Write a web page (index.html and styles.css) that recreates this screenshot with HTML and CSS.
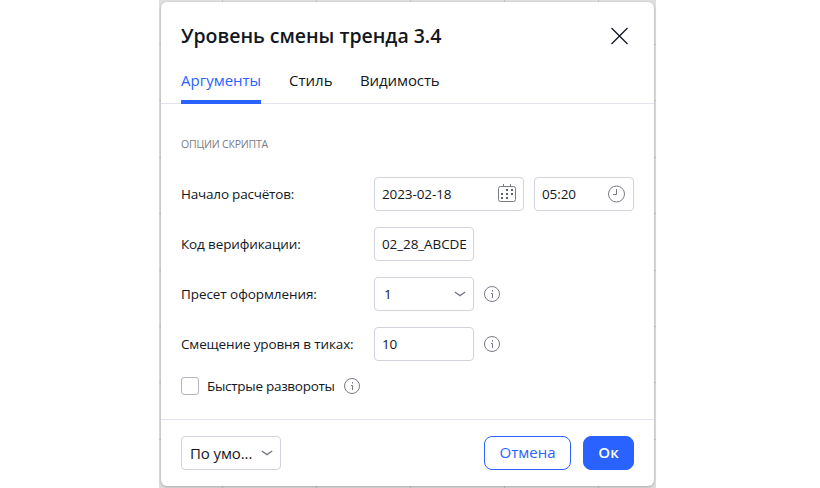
FILE: index.html
```html
<!DOCTYPE html>
<html lang="ru">
<head>
<meta charset="utf-8">
<title>Уровень смены тренда 3.4</title>
<link rel="stylesheet" href="styles.css">
</head>
<body>
<svg class="defs" aria-hidden="true">
  <symbol id="info" viewBox="0 0 16 16"><circle cx="8" cy="8" r="7.5"/><path d="M7 7.500h1.500V12M8.500 4v1.500"/></symbol>
  <symbol id="chevron" viewBox="0 0 12 6"><path d="M.8 1 6 4.500 11.200 1" stroke-width="1.500"/></symbol>
</svg>
<div class="backdrop">
  <main class="dialog">
    <header class="header">
      <h1 class="title">Уровень смены тренда 3.4</h1>
      <svg class="close" viewBox="0 0 18 18"><path d="m1.500 1 16 16M17.500 1l-16 16"/></svg>
    </header>
    <nav class="tabs">
      <a class="tab active">Аргументы</a>
      <a class="tab style">Стиль</a>
      <a class="tab visibility">Видимость</a>
    </nav>
    <section class="content">
      <h2 class="section-title">ОПЦИИ СКРИПТА</h2>
      <div class="row">
        <span class="label start">Начало расчётов:</span>
        <div class="field date"><span>2023-02-18</span>
          <svg class="icon calendar" viewBox="0 0 18 18"><rect x=".5" y="2.5" width="17" height="15" rx="2"/><path d="M5.500 0v3M12.500 0v3"/><path class="dots" d="M8 5h2v2H8zM13 5h2v2h-2zM3 9h2v2H3zM8 9h2v2H8zM13 9h2v2h-2zM3 13h2v2H3zM8 13h2v2H8z"/></svg>
        </div>
        <div class="field time"><span>05:20</span>
          <svg class="icon clock" viewBox="0 0 18 18"><circle cx="8.5" cy="9" r="8"/><path d="M8.500 4v5.500H5"/></svg>
        </div>
      </div>
      <div class="row">
        <span class="label">Код верификации:</span>
        <div class="field"><span>02_28_ABCDE</span></div>
      </div>
      <div class="row">
        <span class="label preset">Пресет оформления:</span>
        <div class="field select"><span>1</span><svg class="chevron"><use href="#chevron"/></svg></div>
        <svg class="info"><use href="#info"/></svg>
      </div>
      <div class="row">
        <span class="label">Смещение уровня в тиках:</span>
        <div class="field"><span>10</span></div>
        <svg class="info"><use href="#info"/></svg>
      </div>
      <div class="check-row">
        <span class="checkbox"></span>
        <span class="check-label">Быстрые развороты</span>
        <svg class="info"><use href="#info"/></svg>
      </div>
    </section>
    <footer class="footer">
      <div class="field defaults"><span>По умо...</span><svg class="chevron"><use href="#chevron"/></svg></div>
      <button class="button cancel">Отмена</button>
      <button class="button ok">Ок</button>
    </footer>
  </main>
</div>
</body>
</html>
```

FILE: styles.css
```css
* { box-sizing: border-box; }
body {
  margin: 0;
  height: 488px;
  overflow: hidden;
  background: #fff;
  color: #131722;
  font: 13.5px/20px "Trebuchet MS", "Open Sans", "Noto Sans", sans-serif;
}
.defs { position: absolute; width: 0; height: 0; }
svg { display: block; flex: none; fill: none; stroke: #787b86; }
.backdrop {
  width: 497px;
  height: 488px;
  margin-left: 159px;
  padding: 2px 2px 0;
  background:
    repeating-linear-gradient(90deg, transparent 0 63px, #c5c6c8 63px 64px, transparent 64px 94px),
    repeating-linear-gradient(transparent 0 44px, #c5c6c8 44px 45px, transparent 45px 56.4px),
    #dfdfdf;
}
.dialog {
  display: flex;
  flex-direction: column;
  width: 493px;
  height: 484px;
  border-radius: 6px;
  background: #fff;
  box-shadow: 0 1px 3px rgba(0, 0, 0, .25);
}
.header {
  display: flex;
  align-items: center;
  justify-content: space-between;
  height: 67px;
  padding: 1px 26px 0 20px;
}
.title { margin: 0; font-size: 19.5px; line-height: 28px; font-weight: 600; letter-spacing: -.02px; white-space: nowrap; }
.close { width: 18px; height: 18px; stroke: #131722; stroke-width: 1.3; }
.tabs {
  display: flex;
  height: 35px;
  padding-left: 20px;
  border-bottom: 1px solid #e0e3eb;
  font-size: 15px;
  line-height: 22px;
}
.tab { height: 35px; margin-right: 28px; white-space: nowrap; }
.tab.active { width: 80px; color: #2962ff; border-bottom: 4px solid #2962ff; }
.tab.style { width: 43px; }
.tab.visibility { letter-spacing: -.1px; }
.content { height: 315px; padding: 31px 20px 0; }
.section-title { margin: 0 0 24px; color: #787b86; font-size: 10.5px; line-height: 18px; font-weight: 400; letter-spacing: -.2px; }
.row { display: flex; align-items: center; height: 34px; margin-bottom: 16px; }
.label { width: 193px; letter-spacing: -.13px; white-space: nowrap; }
.label.start { letter-spacing: -.2px; }
.label.preset { letter-spacing: -.07px; }
.field {
  display: flex;
  align-items: center;
  justify-content: space-between;
  width: 100px;
  height: 34px;
  padding: 0 7px;
  border: 1px solid #d1d4dc;
  border-radius: 4px;
  letter-spacing: -.1px;
  white-space: nowrap;
}
.date { width: 150px; margin-right: 10px; }
.icon { width: 18px; height: 18px; }
.calendar { margin-top: -2px; }
.dots { fill: #5d606b; stroke: none; }
.select { padding-left: 9px; }
.chevron { width: 12px; height: 6px; }
.info { width: 16px; height: 16px; margin-left: 10px; }
.check-row { display: flex; align-items: center; height: 18px; }
.checkbox { width: 18px; height: 18px; margin-right: 8px; border: 1px solid #b2b5be; border-radius: 3px; }
.check-label { width: 127px; letter-spacing: -.28px; white-space: nowrap; }
.footer {
  display: flex;
  align-items: center;
  flex: 1;
  padding: 0 20px;
  border-top: 1px solid #e0e3eb;
}
.defaults { margin-right: auto; padding-left: 8px; font-size: 15px; }
.button {
  height: 34px;
  padding: 0 0 2px;
  border: 1px solid #2962ff;
  border-radius: 8px;
  font: 15px/24px "Trebuchet MS", "Open Sans", "Noto Sans", sans-serif;
}
.cancel { width: 87px; margin-right: 12px; background: #fff; color: #2962ff; }
.ok { width: 51px; background: #2962ff; color: #fff; font-weight: 600; }
```
